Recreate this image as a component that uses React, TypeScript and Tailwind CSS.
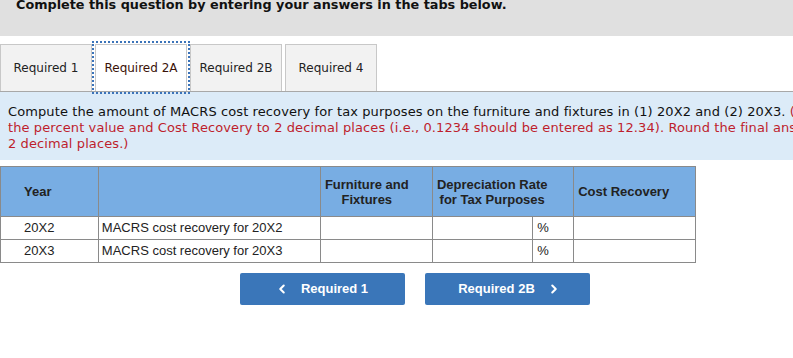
import { ChevronLeft, ChevronRight } from "lucide-react";

const tabs = ["Required 1", "Required 2A", "Required 2B", "Required 4"];

const rows = [
  { year: "20X2", label: "MACRS cost recovery for 20X2" },
  { year: "20X3", label: "MACRS cost recovery for 20X3" },
];

export default function App() {
  return (
    <div className="w-[793px] h-[358px] overflow-hidden bg-white">
      <div className="h-[36px] bg-[#e0e0e0] px-4 overflow-hidden">
        <p className="-mt-[3px] text-[12.8px] font-bold text-[#111] leading-[16px] font-['DejaVu_Sans',Verdana,sans-serif]">
          Complete this question by entering your answers in the tabs below.
        </p>
      </div>

      <div className="flex gap-[3px] mt-[8px] h-[47px] text-[12px] text-[#222] font-['DejaVu_Sans',Verdana,sans-serif]">
        {tabs.map((t, i) => (
          <div
            key={t}
            className={`w-[92px] flex items-center justify-center border border-b-0 border-[#c8c8c8] ${
              i === 1
                ? "bg-white text-[#3a1208] outline-2 outline-dotted outline-[#3b73b9] outline-offset-1"
                : "bg-[#f2f2f2]"
            }`}
          >
            {t}
          </div>
        ))}
      </div>

      <div className="h-[69px] bg-[#dcebf8] border-t border-[#a8a8a8] px-2 pt-[12px] overflow-hidden whitespace-nowrap text-[13px] tracking-[0.1px] leading-[16px] font-['DejaVu_Sans',Verdana,sans-serif]">
        <p className="text-[#111]">
          Compute the amount of MACRS cost recovery for tax purposes on the
          furniture and fixtures in (1) 20X2 and (2) 20X3.{" "}
          <span className="text-[#be1e2d]">(Round</span>
        </p>
        <p className="text-[#be1e2d]">
          the percent value and Cost Recovery to 2 decimal places (i.e., 0.1234
          should be entered as 12.34). Round the final answers to
        </p>
        <p className="text-[#be1e2d]">2 decimal places.)</p>
      </div>

      <table className="mt-[6px] w-[696px] border-collapse text-[13px] text-[#222] font-['Liberation_Sans',Arial,sans-serif]">
        <colgroup>
          <col className="w-[98px]" />
          <col className="w-[223px]" />
          <col className="w-[112px]" />
          <col className="w-[100px]" />
          <col className="w-[41px]" />
          <col className="w-[122px]" />
        </colgroup>
        <thead>
          <tr className="h-[50px] bg-[#78ade3] font-bold leading-[15px]">
            <th className="border border-[#8a8a8a] text-left pl-[23px]">Year</th>
            <th className="border border-[#8a8a8a]"></th>
            <th className="border border-[#8a8a8a] align-top pt-[10px] pr-[20px] font-bold">
              Furniture and
              <br />
              Fixtures
            </th>
            <th
              colSpan={2}
              className="border border-[#8a8a8a] align-top pt-[10px] pr-[22px] font-bold"
            >
              Depreciation Rate
              <br />
              for Tax Purposes
            </th>
            <th className="border border-[#8a8a8a] text-left pl-[4px]">
              Cost Recovery
            </th>
          </tr>
        </thead>
        <tbody>
          {rows.map((r) => (
            <tr key={r.year} className="h-[23px]">
              <td className="border border-[#8a8a8a] pl-[23px]">{r.year}</td>
              <td className="border border-[#8a8a8a] pl-[3px]">{r.label}</td>
              <td className="border border-[#8a8a8a]"></td>
              <td className="border border-[#8a8a8a]"></td>
              <td className="border border-[#8a8a8a] pl-[4px]">%</td>
              <td className="border border-[#8a8a8a]"></td>
            </tr>
          ))}
        </tbody>
      </table>

      <div className="flex gap-[20px] ml-[240px] mt-[10px] text-[13px] font-bold text-white font-['Liberation_Sans',Arial,sans-serif]">
        <button className="w-[165px] h-[32px] rounded-[2px] bg-[#3a76b9] flex items-center justify-center gap-[12px] pr-[2px]">
          <ChevronLeft size={14} strokeWidth={3.5} />
          <span>Required 1</span>
        </button>
        <button className="w-[165px] h-[32px] rounded-[2px] bg-[#3a76b9] flex items-center justify-center gap-[12px] pl-[4px]">
          <span>Required 2B</span>
          <ChevronRight size={14} strokeWidth={3.5} />
        </button>
      </div>
    </div>
  );
}
